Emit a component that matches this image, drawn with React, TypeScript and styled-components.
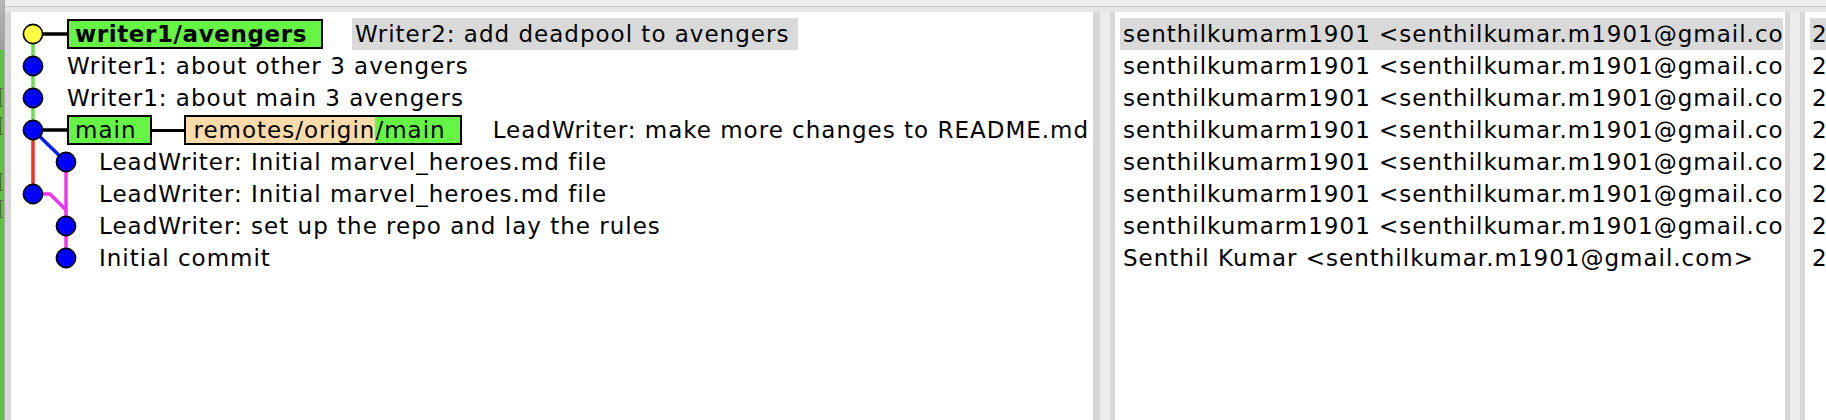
import React from "react";
import styled, { createGlobalStyle } from "styled-components";

const Global = createGlobalStyle`
  html, body { margin: 0; padding: 0; background: #fff; }
  body {
    width: 1826px;
    height: 420px;
    overflow: hidden;
    font-family: "DejaVu Sans", "Liberation Sans", sans-serif;
  }
  #root { height: 420px; }
`;

const Window = styled.div`
  display: flex;
  width: 1826px;
  height: 420px;
  overflow: hidden;
`;

const LeftStrip = styled.div`
  flex: none;
  width: 4px;
  border-right: 1px solid #a9a9a9;
  display: flex;
  flex-direction: column;
  background: #5cc43b;
`;

const StripTop = styled.div`
  height: 50px;
  background: linear-gradient(#b8b8b8, #9c9c9c);
`;

const Bracket = styled.span<{ $top: number; $h: number }>`
  display: block;
  margin-top: ${(p) => p.$top}px;
  height: ${(p) => p.$h}px;
  width: 3px;
  border: 1px solid #3f6e33;
  border-right: none;
  box-sizing: border-box;
`;

const Main = styled.div`
  flex: 1;
  min-width: 0;
  display: flex;
  flex-direction: column;
`;

const TopStrip = styled.div`
  flex: none;
  height: 6px;
  background: #efefef;
  border-bottom: 1px solid #c8c8c8;
`;

const PanesRow = styled.div`
  flex: 1;
  min-height: 0;
  display: flex;
  padding-top: 5px;
  background: #e6e6e6;
`;

const Pane = styled.div<{ $w?: number; $bl: number; $br: number }>`
  ${(p) => (p.$w ? `width: ${p.$w}px; flex: none;` : `flex: 1; min-width: 0;`)}
  box-sizing: border-box;
  border-left: ${(p) => p.$bl}px solid #d8d8d8;
  border-right: ${(p) => p.$br}px solid #d6d6d6;
  display: flex;
`;

const Sash = styled.div`
  flex: none;
  width: 10px;
  background: #ececec;
`;

const PaneBody = styled.div`
  flex: 1;
  min-width: 0;
  position: relative;
  background: #fff;
  padding-top: 6px;
  overflow: hidden;
`;

const Graph = styled.svg`
  position: absolute;
  left: 0;
  top: 0;
  z-index: 0;
`;

const Row = styled.div<{ $indent?: number; $hl?: boolean; $ml?: number; $mr?: number }>`
  position: relative;
  z-index: 1;
  height: 32px;
  display: flex;
  align-items: center;
  box-sizing: border-box;
  padding-left: ${(p) => p.$indent ?? 0}px;
  margin: 0 ${(p) => p.$mr ?? 0}px 0 ${(p) => p.$ml ?? 0}px;
  white-space: nowrap;
  overflow: hidden;
  font-size: 23px;
  letter-spacing: 1px;
  color: #000;
  background: ${(p) => (p.$hl ? "#d9d9d9" : "transparent")};
`;

const RefBox = styled.span<{ $bold?: boolean }>`
  flex: none;
  display: inline-flex;
  align-items: center;
  box-sizing: border-box;
  height: 30px;
  border: 2px solid #000;
  background: #67f545;
  padding: 0 14px 0 6px;
  font-weight: ${(p) => (p.$bold ? 700 : 400)};
  letter-spacing: ${(p) => (p.$bold ? "0.6px" : "1px")};
`;

const RemoteBox = styled.span`
  flex: none;
  display: inline-flex;
  box-sizing: border-box;
  height: 30px;
  border: 2px solid #000;
`;

const RemotePart = styled.span<{ $head?: boolean }>`
  display: inline-flex;
  align-items: center;
  background: ${(p) => (p.$head ? "#67f545" : "#fbdba9")};
  padding: ${(p) => (p.$head ? "0 14px 0 0" : "0 0 0 7px")};
`;

const Connector = styled.span`
  flex: none;
  width: 32px;
  height: 3px;
  background: #000;
`;

const Subject = styled.span<{ $gap: number }>`
  margin-left: ${(p) => p.$gap}px;
`;

const Selected = styled.span`
  display: inline-flex;
  align-items: center;
  height: 32px;
  margin-left: 29px;
  padding: 0 9px 0 3px;
  background: #d9d9d9;
`;

const rowY = (i: number) => 22 + 32 * i;
const C1 = 22;
const C2 = 55;

const GraphDrawing = () => (
  <Graph width="120" height="290" viewBox="0 0 120 290">
    <line x1={C1} y1={rowY(0)} x2={56} y2={rowY(0)} stroke="#000" strokeWidth="3.5" />
    <line x1={C1} y1={rowY(3)} x2={56} y2={rowY(3)} stroke="#000" strokeWidth="3.5" />
    <line x1={C1} y1={rowY(0)} x2={C1} y2={rowY(3)} stroke="#6ee04b" strokeWidth="3.5" />
    <line x1={C1} y1={rowY(3)} x2={C1} y2={rowY(5)} stroke="#ee3322" strokeWidth="3.5" />
    <line x1={C1} y1={rowY(3)} x2={C2} y2={rowY(4)} stroke="#0a1eee" strokeWidth="3.5" />
    <line x1={C2} y1={rowY(4)} x2={C2} y2={rowY(7)} stroke="#ee36ee" strokeWidth="3.5" />
    <polyline
      points={`${C1},${rowY(5)} 39,${rowY(5)} ${C2},${rowY(5) + 16}`}
      fill="none"
      stroke="#ee36ee"
      strokeWidth="3.5"
    />
    {[
      [C1, 0, "#ffff44"],
      [C1, 1, "#0000ff"],
      [C1, 2, "#0000ff"],
      [C1, 3, "#0000ff"],
      [C2, 4, "#0000ff"],
      [C1, 5, "#0000ff"],
      [C2, 6, "#0000ff"],
      [C2, 7, "#0000ff"],
    ].map(([x, r, c], i) => (
      <circle key={i} cx={x as number} cy={rowY(r as number)} r="9.6" fill={c as string} stroke="#000" strokeWidth="1.6" />
    ))}
  </Graph>
);

const authors = [
  "senthilkumarm1901 <senthilkumar.m1901@gmail.com>",
  "senthilkumarm1901 <senthilkumar.m1901@gmail.com>",
  "senthilkumarm1901 <senthilkumar.m1901@gmail.com>",
  "senthilkumarm1901 <senthilkumar.m1901@gmail.com>",
  "senthilkumarm1901 <senthilkumar.m1901@gmail.com>",
  "senthilkumarm1901 <senthilkumar.m1901@gmail.com>",
  "senthilkumarm1901 <senthilkumar.m1901@gmail.com>",
  "Senthil Kumar <senthilkumar.m1901@gmail.com>",
];

export default function App() {
  return (
    <>
      <Global />
      <Window>
        <LeftStrip>
          <StripTop />
          <Bracket $top={38} $h={19} />
          <Bracket $top={10} $h={18} />
          <Bracket $top={38} $h={18} />
          <Bracket $top={9} $h={18} />
        </LeftStrip>
        <Main>
          <TopStrip />
          <PanesRow>
            <Pane $w={1095} $bl={6} $br={7}>
              <PaneBody>
                <GraphDrawing />
                <Row $indent={56}>
                  <RefBox $bold>writer1/avengers</RefBox>
                  <Selected>Writer2: add deadpool to avengers</Selected>
                </Row>
                <Row $indent={56}>Writer1: about other 3 avengers</Row>
                <Row $indent={56}>Writer1: about main 3 avengers</Row>
                <Row $indent={56}>
                  <RefBox>main</RefBox>
                  <Connector />
                  <RemoteBox>
                    <RemotePart>remotes/origin</RemotePart>
                    <RemotePart $head>/main</RemotePart>
                  </RemoteBox>
                  <Subject $gap={31}>LeadWriter: make more changes to README.md</Subject>
                </Row>
                <Row $indent={88}>LeadWriter: Initial marvel_heroes.md file</Row>
                <Row $indent={88}>LeadWriter: Initial marvel_heroes.md file</Row>
                <Row $indent={88}>LeadWriter: set up the repo and lay the rules</Row>
                <Row $indent={88}>Initial commit</Row>
              </PaneBody>
            </Pane>
            <Sash />
            <Pane $w={680} $bl={5} $br={5}>
              <PaneBody>
                {authors.map((a, i) => (
                  <Row key={i} $indent={3} $ml={5} $mr={2} $hl={i === 0}>
                    {a}
                  </Row>
                ))}
              </PaneBody>
            </Pane>
            <Sash />
            <Pane $bl={5} $br={0}>
              <PaneBody>
                {authors.map((_, i) => (
                  <Row key={i} $indent={2} $ml={5} $hl={i === 0}>
                    2023-01-01 10:00:00
                  </Row>
                ))}
              </PaneBody>
            </Pane>
          </PanesRow>
        </Main>
      </Window>
    </>
  );
}
